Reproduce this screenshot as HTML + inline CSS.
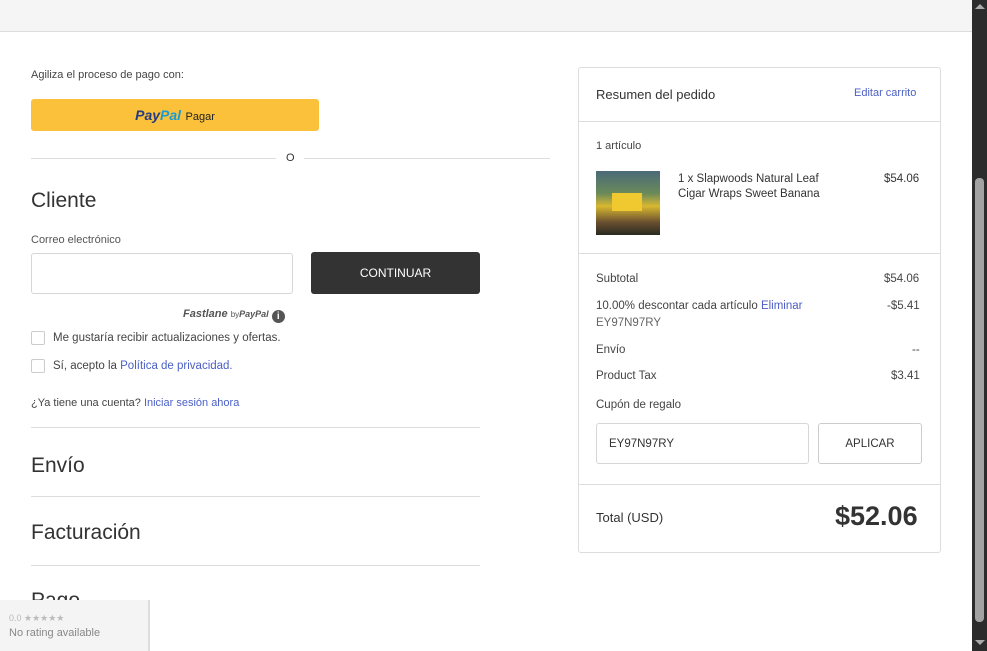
<!DOCTYPE html>
<html><head><meta charset="utf-8"><style>
*{box-sizing:border-box;margin:0;padding:0}
body{width:987px;height:651px;overflow:hidden;background:#fff;font-family:"Liberation Sans",sans-serif;color:#333;position:relative}
.a{position:absolute;white-space:nowrap}
.s{font-size:11.5px;color:#444}
.link{color:#4b5fc7}
.h{font-size:21px;color:#333}
.hr{position:absolute;height:1px;background:#ddd}
.cb{position:absolute;width:14px;height:14px;border:1px solid #ccc;border-radius:2px}
</style></head><body>
<div class="a" style="left:0;top:0;width:972px;height:32px;background:#f5f5f5;border-bottom:1px solid #ddd"></div>

<div class="a s" style="left:31px;top:69px;font-size:11px">Agiliza el proceso de pago con:</div>
<div class="a" style="left:31px;top:99px;width:288px;height:32px;background:#fcc13a;border-radius:3px;text-align:center;line-height:32px"><span style="font-style:italic;font-weight:bold;font-size:14px;color:#253b80">Pay</span><span style="font-style:italic;font-weight:bold;font-size:14px;color:#179bd7">Pal</span> <span style="font-size:11px;color:#222">Pagar</span></div>
<div class="hr" style="left:31px;top:158px;width:245px"></div>
<div class="a" style="left:286px;top:152px;font-size:11px;color:#333">O</div>
<div class="hr" style="left:304px;top:158px;width:246px"></div>

<div class="a h" style="left:31px;top:189px">Cliente</div>
<div class="a s" style="left:31px;top:234px;color:#555;font-size:11px">Correo electrónico</div>
<div class="a" style="left:31px;top:253px;width:262px;height:41px;border:1px solid #d6d6d6;border-radius:3px"></div>
<div class="a" style="left:311px;top:252px;width:169px;height:42px;background:#333;border-radius:3px;color:#fff;font-size:12px;text-align:center;line-height:42px">CONTINUAR</div>
<div class="a" style="left:183px;top:308px;font-size:11px;color:#555"><b><i>Fastlane</i></b> <span style="font-size:8px">by</span><b><i style="font-size:9px">PayPal</i></b> <span style="display:inline-block;width:13px;height:13px;border-radius:50%;background:#555;color:#fff;font-size:10px;text-align:center;line-height:13px;font-weight:bold;vertical-align:-2px">i</span></div>
<div class="cb" style="left:31px;top:331px"></div>
<div class="a s" style="left:53px;top:332px">Me gustaría recibir actualizaciones y ofertas.</div>
<div class="cb" style="left:31px;top:359px"></div>
<div class="a s" style="left:53px;top:360px">Sí, acepto la <span class="link">Política de privacidad.</span></div>
<div class="a s" style="left:31px;top:397px;font-size:11px">¿Ya tiene una cuenta? <span class="link">Iniciar sesión ahora</span></div>
<div class="hr" style="left:31px;top:427px;width:449px"></div>
<div class="a h" style="left:31px;top:454px">Envío</div>
<div class="hr" style="left:31px;top:496px;width:449px"></div>
<div class="a h" style="left:31px;top:521px">Facturación</div>
<div class="hr" style="left:31px;top:565px;width:449px"></div>
<div class="a h" style="left:31px;top:589px">Pago</div>

<div class="a" style="left:0;top:600px;width:150px;height:51px;background:#f4f4f4;border-right:2px solid #ddd"></div>
<div class="a" style="left:9px;top:613px;font-size:9px;color:#bbb">0.0 ★★★★★</div>
<div class="a" style="left:9px;top:627px;font-size:11px;color:#888">No rating available</div>

<div class="a" style="left:578px;top:67px;width:363px;height:486px;border:1px solid #ddd;border-radius:3px"></div>
<div class="a" style="left:596px;top:87px;font-size:13px;color:#333">Resumen del pedido</div>
<div class="a link" style="left:854px;top:87px;font-size:11px">Editar carrito</div>
<div class="hr" style="left:579px;top:121px;width:361px"></div>
<div class="a s" style="left:596px;top:140px;font-size:11px">1 artículo</div>
<div class="a" style="left:596px;top:171px;width:64px;height:64px;background:linear-gradient(180deg,#4a6a7a 0%,#6a8a5a 35%,#d8b830 55%,#6a5030 80%,#2a2a20 100%)"></div>
<div class="a" style="left:612px;top:193px;width:30px;height:18px;background:#f0c830"></div>
<div class="a s" style="left:678px;top:172px;line-height:15px;color:#333">1 x Slapwoods Natural Leaf<br>Cigar Wraps Sweet Banana</div>
<div class="a s" style="left:884px;top:173px;color:#333">$54.06</div>
<div class="hr" style="left:579px;top:253px;width:361px"></div>
<div class="a s" style="left:596px;top:273px">Subtotal</div><div class="a s" style="left:884px;top:273px">$54.06</div>
<div class="a s" style="left:596px;top:300px">10.00% descontar cada artículo <span class="link">Eliminar</span></div><div class="a s" style="left:887px;top:300px">-$5.41</div>
<div class="a s" style="left:596px;top:317px;color:#666">EY97N97RY</div>
<div class="a s" style="left:596px;top:344px">Envío</div><div class="a s" style="left:912px;top:344px">--</div>
<div class="a s" style="left:596px;top:370px">Product Tax</div><div class="a s" style="left:891px;top:370px">$3.41</div>
<div class="a s" style="left:596px;top:399px">Cupón de regalo</div>
<div class="a" style="left:596px;top:423px;width:213px;height:41px;border:1px solid #d6d6d6;border-radius:3px;font-size:11.5px;line-height:41px;padding-left:12px;color:#333">EY97N97RY</div>
<div class="a" style="left:818px;top:423px;width:104px;height:41px;border:1px solid #ccc;border-radius:3px;font-size:11.5px;line-height:41px;text-align:center;color:#333">APLICAR</div>
<div class="hr" style="left:579px;top:484px;width:361px"></div>
<div class="a" style="left:596px;top:510px;font-size:13px;color:#333">Total (USD)</div>
<div class="a" style="left:835px;top:501px;font-size:27px;font-weight:bold;color:#333">$52.06</div>

<div class="a" style="left:972px;top:0;width:15px;height:651px;background:#2c2c2c"></div>
<div class="a" style="left:975px;top:178px;width:9px;height:444px;background:#a3a3a3;border-radius:4px"></div>
<div class="a" style="left:975px;top:4px;width:0;height:0;border-left:5px solid transparent;border-right:5px solid transparent;border-bottom:5px solid #aaa"></div>
<div class="a" style="left:975px;top:640px;width:0;height:0;border-left:5px solid transparent;border-right:5px solid transparent;border-top:5px solid #aaa"></div>
</body></html>
